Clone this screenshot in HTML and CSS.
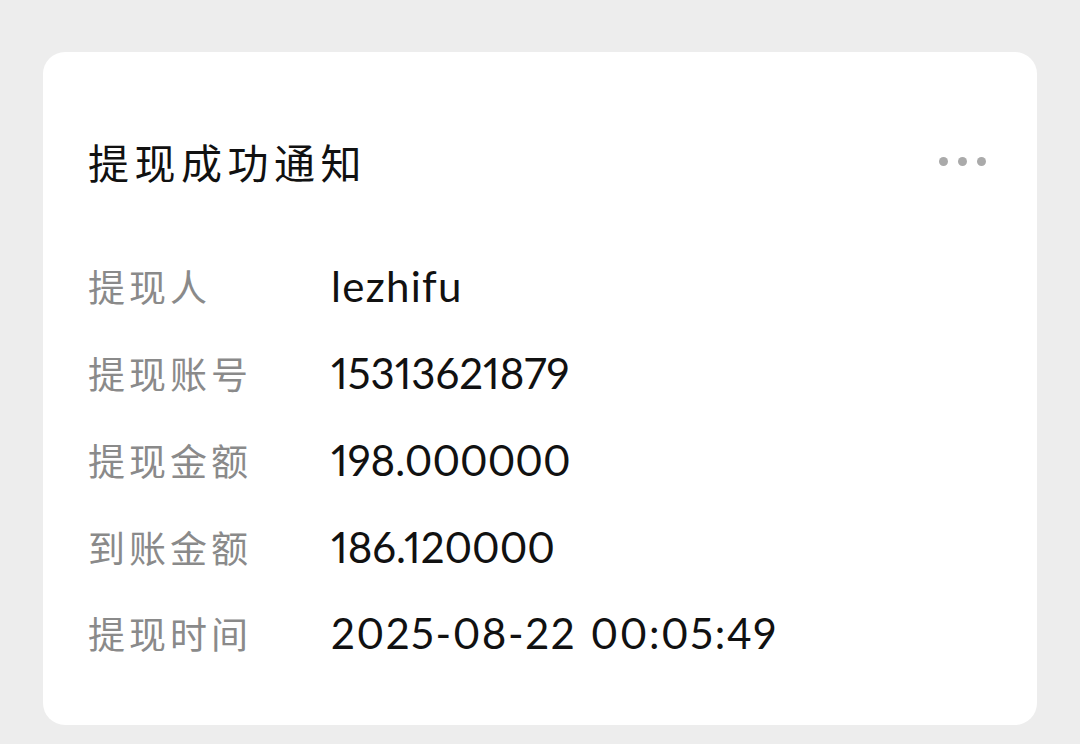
FILE: index.html
```html
<!DOCTYPE html>
<html lang="zh-CN">
<head>
<meta charset="utf-8">
<title>提现成功通知</title>
<link rel="stylesheet" href="styles.css">
</head>
<body>
<div class="card">
  <div class="header">
    <h1 class="title">提现成功通知</h1>
    <div class="more"><span></span><span></span><span></span></div>
  </div>
  <dl class="rows">
    <div class="row"><dt>提现人</dt><dd class="value-text">lezhifu</dd></div>
    <div class="row"><dt>提现账号</dt><dd>15313621879</dd></div>
    <div class="row"><dt>提现金额</dt><dd>198.000000</dd></div>
    <div class="row"><dt>到账金额</dt><dd>186.120000</dd></div>
    <div class="row"><dt>提现时间</dt><dd class="value-date">2025-08-22 00:05:49</dd></div>
  </dl>
</div>
</body>
</html>
```
FILE: styles.css
```css
html, body {
  margin: 0;
  padding: 0;
  background: #ededed;
  height: 744px;
  overflow: hidden;
}
body {
  padding-top: 52px;
  box-sizing: border-box;
  font-family: "Noto Sans CJK SC", "Noto Sans", sans-serif;
}
.card {
  margin: 0 43px;
  height: 673px;
  background: #ffffff;
  border-radius: 22px;
  box-sizing: border-box;
  padding: 79px 51px 0 45px;
}
.header {
  display: flex;
  align-items: center;
  justify-content: space-between;
  height: 60px;
}
.title {
  margin: 0;
  font-size: 41px;
  font-weight: 400;
  letter-spacing: 5.5px;
  color: #111;
  line-height: 60px;
}
.more {
  display: flex;
  gap: 10px;
  align-items: center;
}
.more span {
  width: 9px;
  height: 9px;
  border-radius: 50%;
  background: #aaaaaa;
}
.rows {
  margin: 52px 0 0;
  padding: 0;
  display: flex;
  flex-direction: column;
}
.row {
  display: flex;
  align-items: center;
  height: 86.75px;
}
.row dt {
  width: 243px;
  flex: none;
  font-size: 37px;
  letter-spacing: 4px;
  color: #8a8a8a;
  line-height: 50px;
}
.row dd {
  margin: 0;
  font-family: Lato, "Noto Sans", sans-serif;
  font-variant-numeric: proportional-nums;
  font-size: 42px;
  color: #111;
  line-height: 50px;
}
.row dd.value-text {
  letter-spacing: 1.3px;
}
.row dd.value-date {
  letter-spacing: 1.6px;
  word-spacing: 2px;
}
```
